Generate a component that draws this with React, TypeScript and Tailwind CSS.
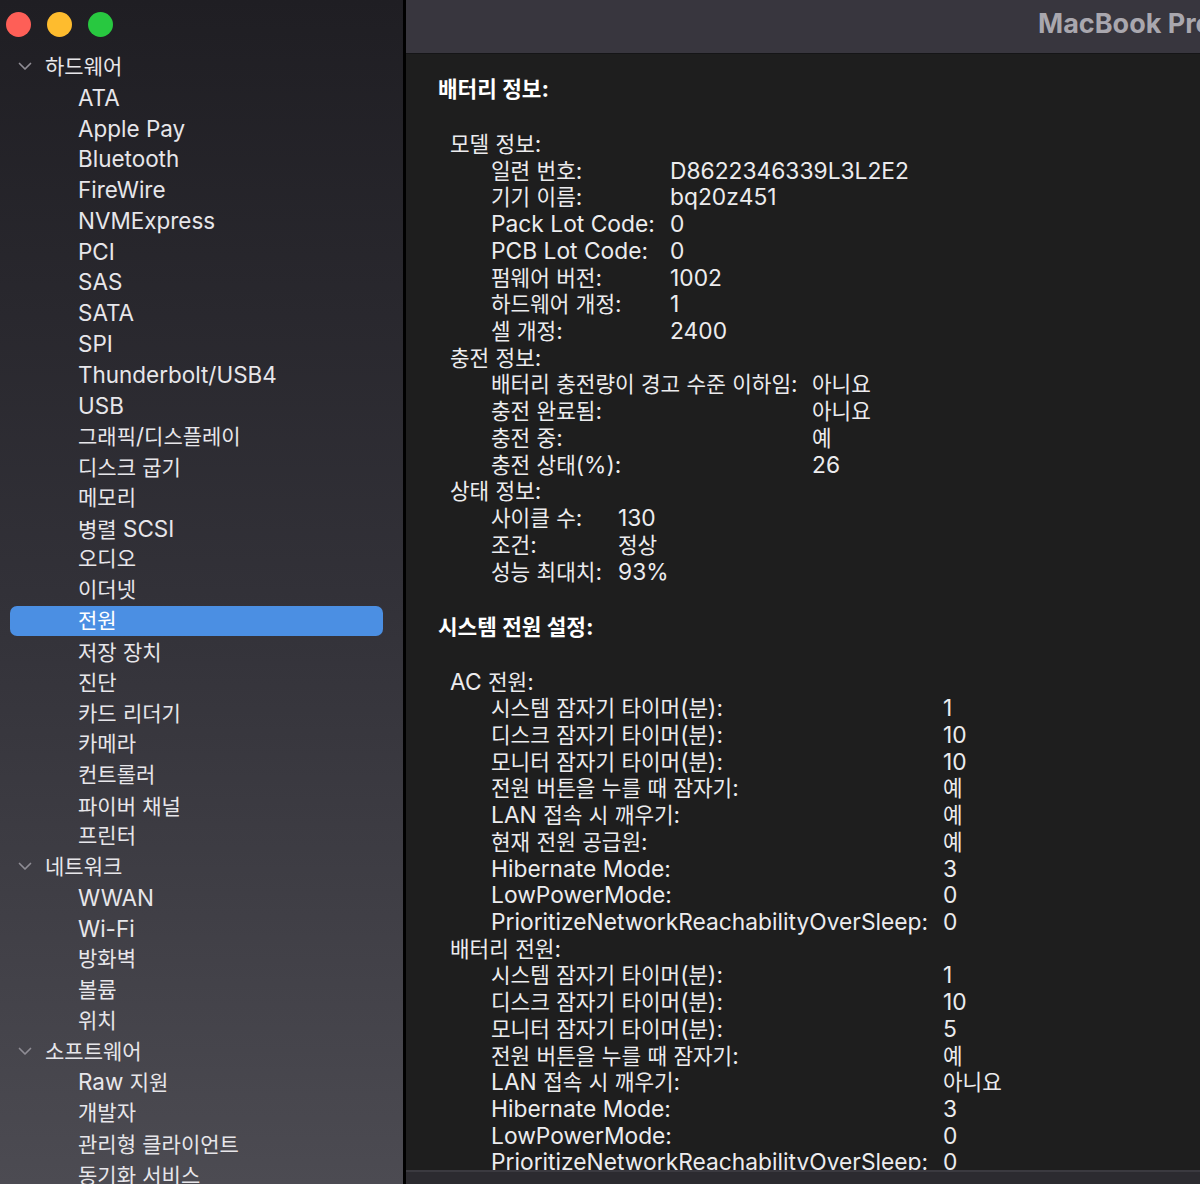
import React from 'react';

type NavGroup = { title: string; items: string[] };

const NAV: NavGroup[] = [
  {
    title: '하드웨어',
    items: [
      'ATA', 'Apple Pay', 'Bluetooth', 'FireWire', 'NVMExpress', 'PCI', 'SAS', 'SATA', 'SPI',
      'Thunderbolt/USB4', 'USB', '그래픽/디스플레이', '디스크 굽기', '메모리', '병렬 SCSI', '오디오',
      '이더넷', '전원', '저장 장치', '진단', '카드 리더기', '카메라', '컨트롤러', '파이버 채널', '프린터',
    ],
  },
  { title: '네트워크', items: ['WWAN', 'Wi-Fi', '방화벽', '볼륨', '위치'] },
  { title: '소프트웨어', items: ['Raw 지원', '개발자', '관리형 클라이언트', '동기화 서비스'] },
];

type Row = [string, string];
type Section = { title: string; labelW: string; rows: Row[] };

const BATTERY: Section[] = [
  {
    title: '모델 정보:',
    labelW: 'grid-cols-[179px_auto]',
    rows: [
      ['일련 번호:', 'D8622346339L3L2E2'],
      ['기기 이름:', 'bq20z451'],
      ['Pack Lot Code:', '0'],
      ['PCB Lot Code:', '0'],
      ['펌웨어 버전:', '1002'],
      ['하드웨어 개정:', '1'],
      ['셀 개정:', '2400'],
    ],
  },
  {
    title: '충전 정보:',
    labelW: 'grid-cols-[321px_auto]',
    rows: [
      ['배터리 충전량이 경고 수준 이하임:', '아니요'],
      ['충전 완료됨:', '아니요'],
      ['충전 중:', '예'],
      ['충전 상태(%):', '26'],
    ],
  },
  {
    title: '상태 정보:',
    labelW: 'grid-cols-[127px_auto]',
    rows: [
      ['사이클 수:', '130'],
      ['조건:', '정상'],
      ['성능 최대치:', '93%'],
    ],
  },
];

const POWER: Section[] = [
  {
    title: 'AC 전원:',
    labelW: 'grid-cols-[452px_auto]',
    rows: [
      ['시스템 잠자기 타이머(분):', '1'],
      ['디스크 잠자기 타이머(분):', '10'],
      ['모니터 잠자기 타이머(분):', '10'],
      ['전원 버튼을 누를 때 잠자기:', '예'],
      ['LAN 접속 시 깨우기:', '예'],
      ['현재 전원 공급원:', '예'],
      ['Hibernate Mode:', '3'],
      ['LowPowerMode:', '0'],
      ['PrioritizeNetworkReachabilityOverSleep:', '0'],
    ],
  },
  {
    title: '배터리 전원:',
    labelW: 'grid-cols-[452px_auto]',
    rows: [
      ['시스템 잠자기 타이머(분):', '1'],
      ['디스크 잠자기 타이머(분):', '10'],
      ['모니터 잠자기 타이머(분):', '5'],
      ['전원 버튼을 누를 때 잠자기:', '예'],
      ['LAN 접속 시 깨우기:', '아니요'],
      ['Hibernate Mode:', '3'],
      ['LowPowerMode:', '0'],
      ['PrioritizeNetworkReachabilityOverSleep:', '0'],
    ],
  },
];

// Latin glyphs in the screenshot run wider than Inter at the Hangul size, so Latin runs get a bump.
const Txt = ({ s }: { s: string }) => (
  <>
    {s.split(/([\uAC00-\uD7A3]+)/).map((part, i) =>
      !part ? null : /[\uAC00-\uD7A3]/.test(part) ? (
        <React.Fragment key={i}>{part}</React.Fragment>
      ) : (
        <span key={i} className="text-[1.07em]">{part}</span>
      )
    )}
  </>
);

const Chevron = () => (
  <svg width="14" height="9" viewBox="0 0 14 9" className="text-[#8f8d95]">
    <path d="M1.5 1.5 L7 7 L12.5 1.5" fill="none" stroke="currentColor" strokeWidth="1.7" strokeLinecap="round" strokeLinejoin="round" />
  </svg>
);

const Sidebar = () => (
  <aside className="flex w-[403px] shrink-0 flex-col overflow-hidden bg-gradient-to-b from-[#1f1e23] via-[#323138] to-[#4c4b52]">
    <div className="flex h-[48px] shrink-0 items-center gap-[16px] pl-[6px]">
      <span className="h-[25px] w-[25px] rounded-full bg-[#fe5f57]" />
      <span className="h-[25px] w-[25px] rounded-full bg-[#febc2e]" />
      <span className="h-[25px] w-[25px] rounded-full bg-[#28c840]" />
    </div>
    <ul className="mt-[3.6px] shrink-0 text-[21px] text-[#e7e6ea]">
      {NAV.map(group => (
        <React.Fragment key={group.title}>
          <li className="flex h-[30.78px] items-center">
            <span className="flex w-[45px] justify-center pl-[9px] pr-[4px]">
              <Chevron />
            </span>
            <Txt s={group.title} />
          </li>
          {group.items.map(item => (
            <li key={item} className="flex h-[30.78px] items-center">
              {item === '전원' ? (
                <span className="ml-[10px] mr-[20px] flex h-[30.5px] flex-1 items-center rounded-[7px] bg-[#4b8fe3] pl-[68px] text-white">
                  <Txt s={item} />
                </span>
              ) : (
                <span className="pl-[78px]"><Txt s={item} /></span>
              )}
            </li>
          ))}
        </React.Fragment>
      ))}
    </ul>
  </aside>
);

const Group = ({ section }: { section: Section }) => (
  <div>
    <div className="pl-[12px]"><Txt s={section.title} /></div>
    <div className={`grid ${section.labelW} pl-[53px]`}>
      {section.rows.map(([label, value], i) => (
        <React.Fragment key={i}>
          <span className="whitespace-nowrap"><Txt s={label} /></span>
          <span className="whitespace-nowrap"><Txt s={value} /></span>
        </React.Fragment>
      ))}
    </div>
  </div>
);

export default function App() {
  return (
    <div className="flex h-[1184px] w-[1200px] overflow-hidden bg-[#1e1e1e] font-['Inter','Noto_Sans_CJK_KR',sans-serif] antialiased">
      <Sidebar />
      <div className="w-[3px] shrink-0 bg-black" />
      <main className="flex min-w-0 flex-1 flex-col">
        <header className="flex h-[54px] shrink-0 items-center overflow-hidden border-b border-[#151517] bg-[#38363e] pb-[4px] pl-[632px]">
          <span className="whitespace-nowrap text-[27px] font-bold text-[#a9a7ae]">MacBook Pro</span>
        </header>
        <section className="min-h-0 flex-1 overflow-hidden pl-[32px] pt-[22px] text-[21.3px] leading-[26.72px] text-[#ececee]">
          <div className="font-bold text-white"><Txt s="배터리 정보:" /></div>
          <div className="h-[28.3px]" />
          {BATTERY.map(s => (
            <Group key={s.title} section={s} />
          ))}
          <div className="h-[28.3px]" />
          <div className="font-bold text-white"><Txt s="시스템 전원 설정:" /></div>
          <div className="h-[28.3px]" />
          {POWER.map(s => (
            <Group key={s.title} section={s} />
          ))}
        </section>
        <div className="h-[14px] shrink-0 border-t-2 border-[#3b3a40] bg-[#2c2b30]" />
      </main>
    </div>
  );
}
